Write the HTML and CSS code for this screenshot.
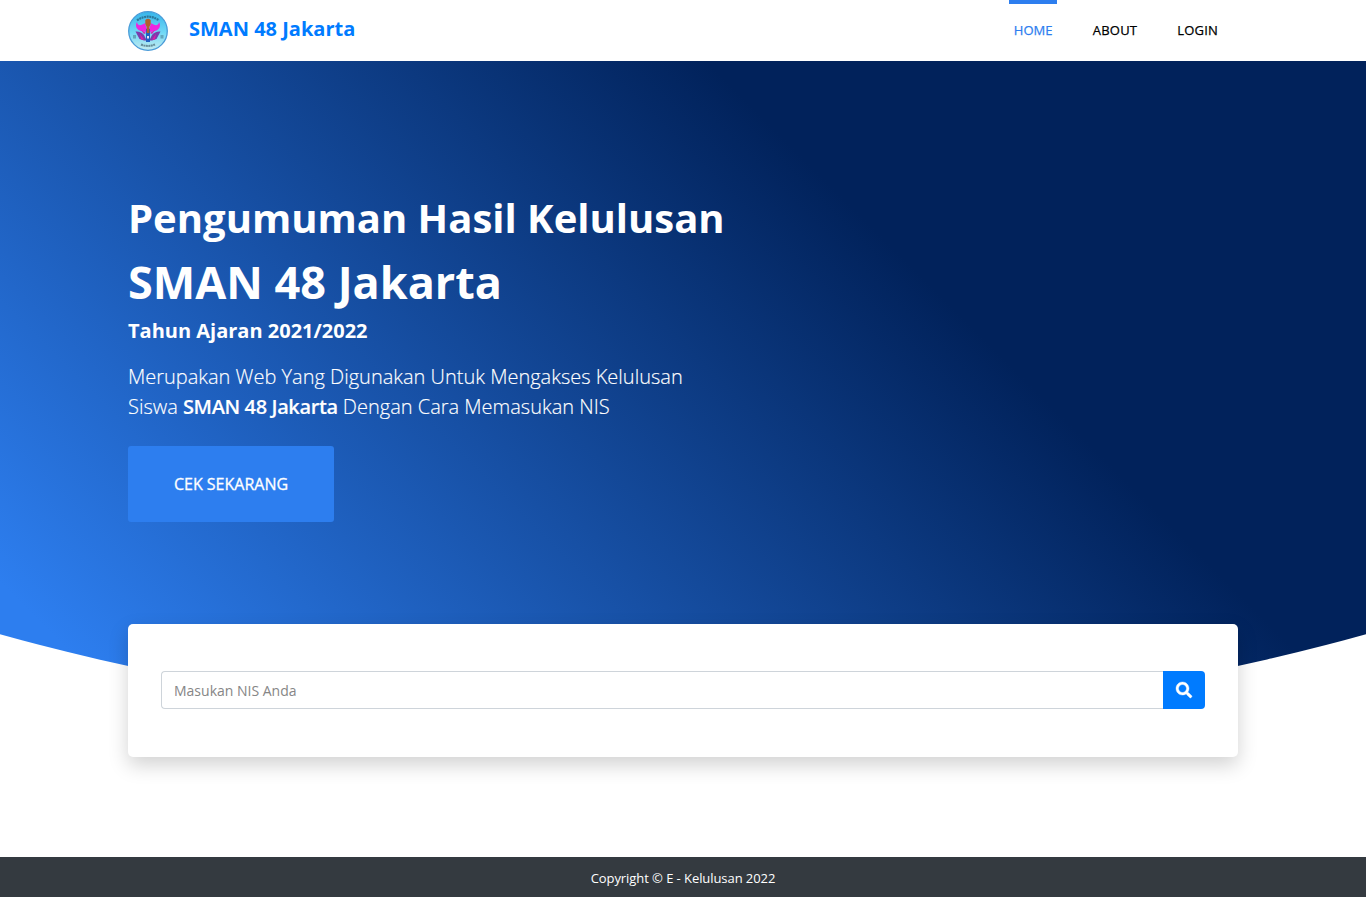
FILE: index.html
```html
<!DOCTYPE html>
<html lang="id">
<head>
<meta charset="utf-8">
<title>SMAN 48 Jakarta</title>
<link rel="stylesheet" href="styles.css">
</head>
<body>
<header class="navbar">
  <div class="container navbar-inner">
    <a class="brand">
      <svg class="logo" viewBox="0 0 40 40">
        <defs><linearGradient id="sky" x1="0" y1="0" x2="0" y2="1"><stop offset="0" stop-color="#36b4ea"/><stop offset=".55" stop-color="#72d9f6"/><stop offset="1" stop-color="#c4ebf0"/></linearGradient></defs>
        <circle cx="20" cy="20" r="19.3" fill="url(#sky)" stroke="#4a9bd8" stroke-width="1.3"/>
        <g class="emblem">
          <path d="M9 9.300Q20 2 31 9.300" fill="none" stroke="#1f5877" stroke-width="2.200" stroke-dasharray="2 .6" opacity=".7"/>
          <path d="M13 33.500Q20 36.500 27 33.500" fill="none" stroke="#4d6f7b" stroke-width="2" stroke-dasharray="2 .5" opacity=".75"/>
          <path d="M5 24h3v3.500H5zM32.500 24h3v3.500h-3z" fill="#5290a6" opacity=".7"/>
          <path d="M9 11C9.500 15 13 15 17 12L18.500 17H21.500L23 12C27 15 30.500 15 31 11C33.500 15 31 19 27 20L22 21H18L13 20C9 19 6.500 15 9 11Z" fill="#ee25df"/>
          <path d="M7.500 20.500Q13 20 16 24L18 28H22L24 24Q27 20 32.500 20.500L28.500 28L24 29.500H16L11.500 28Z" fill="#7c3bad"/>
          <path d="M12 23L16 28.500H13ZM28 23L24 28.500H27ZM13 19L18 22L16 23ZM27 19L22 22L24 23Z" fill="#e01aa7"/>
          <path d="M18 18h4v13h-4z" fill="#2060c4"/>
          <path d="M17.300 9Q20 6.500 22.700 9V13L21.300 16V22H18.700V16L17.300 13Z" fill="#b5602a"/>
          <path d="M19 25h2v2.500h-2z" fill="#e6e3f2"/>
        </g>
      </svg>
      <span class="brand-name">SMAN 48 Jakarta</span>
    </a>
    <nav class="menu">
      <a class="menu-link active">HOME</a>
      <a class="menu-link">ABOUT</a>
      <a class="menu-link">LOGIN</a>
    </nav>
  </div>
</header>
<main>
  <section class="hero">
    <div class="container">
      <h1 class="title">Pengumuman Hasil Kelulusan</h1>
      <h2 class="school">SMAN 48 Jakarta</h2>
      <h3 class="year">Tahun Ajaran 2021/2022</h3>
      <p class="lead">Merupakan Web Yang Digunakan Untuk Mengakses Kelulusan<br>Siswa <strong>SMAN 48 Jakarta</strong> Dengan Cara Memasukan NIS</p>
      <a class="cta">CEK SEKARANG</a>
    </div>
  </section>
  <section class="container search-section">
    <form class="search-card">
      <input class="search-input" type="text" placeholder="Masukan NIS Anda">
      <button class="search-button" type="button" aria-label="Cari">
        <svg width="16" height="16" viewBox="0 0 512 512" fill="#fff" stroke="#fff" stroke-width="12"><path d="M505 442.700L405.300 343c-4.500-4.500-10.600-7-17-7H372c27.600-35.300 44-79.700 44-128C416 93.100 322.900 0 208 0S0 93.100 0 208s93.100 208 208 208c48.300 0 92.700-16.400 128-44v16.300c0 6.400 2.500 12.500 7 17l99.700 99.700c9.400 9.400 24.600 9.400 33.900 0l28.300-28.300c9.400-9.400 9.400-24.600.1-34zM208 336c-70.700 0-128-57.200-128-128 0-70.700 57.200-128 128-128 70.700 0 128 57.200 128 128 0 70.700-57.200 128-128 128z"/></svg>
      </button>
    </form>
  </section>
</main>
<footer class="footer">Copyright © E - Kelulusan 2022</footer>
</body>
</html>
```
FILE: styles.css
```css
* { box-sizing: border-box; }
body { margin: 0; background: #fff; font-family: "Open Sans", sans-serif; overflow: hidden; }
h1, h2, h3, p { margin: 0; }
.container { width: 1110px; margin: 0 auto; }
.navbar { height: 61px; background: #fff; }
.navbar-inner { display: flex; justify-content: space-between; }
.brand { display: flex; gap: 21px; padding-top: 11px; }
.logo { width: 40px; height: 40px; }
.emblem { filter: blur(.45px); }
.brand-name { color: #007bff; font-size: 20px; font-weight: 700; line-height: 36px; }
.menu { display: flex; gap: 30px; padding-right: 15px; }
.menu-link { height: 61px; padding: 0 5px; border-top: 4px solid transparent; font-size: 13px; font-weight: 500; letter-spacing: .2px; line-height: 53px; color: #000; -webkit-text-stroke: .25px; }
.menu-link.active { width: 48px; margin-right: 1px; letter-spacing: 0; color: #2d7eef; border-color: #2d7eef; }
.hero { height: 663px; padding-top: 127px; background: linear-gradient(45deg, #2d7eef 7%, #01225b 67.5%); clip-path: ellipse(1366px 662px at 50% 0); color: #fff; }
.title { font-size: 40px; font-weight: 700; line-height: 60px; }
.school { font-size: 45px; font-weight: 700; line-height: 67px; }
.year { margin-top: 1px; font-size: 20px; font-weight: 700; line-height: 30px; }
.lead { margin-top: 16px; font-size: 20px; font-weight: 300; line-height: 30px; -webkit-text-stroke: .15px; }
.lead strong { font-weight: 600; letter-spacing: -.38px; }
.cta { display: flex; align-items: center; justify-content: center; width: 206px; height: 76px; margin-top: 24px; border-radius: 3px; background: #2d7eef; font-size: 16px; font-weight: 500; -webkit-text-stroke: .3px; }
.search-section { position: relative; margin-top: -100px; height: 233px; }
.search-card { display: flex; height: 133px; padding: 47px 33px; background: #fff; border-radius: 5px; box-shadow: 0 8px 20px rgba(0,0,0,.18); }
.search-input { flex: 1; height: 38px; padding: 0 12px; border: 1px solid #ced4da; border-right: 0; border-radius: 4px 0 0 4px; font: 14px "Open Sans", sans-serif; background: #fff; outline: none; }
.search-input::placeholder { color: #868686; }
.search-button { display: flex; align-items: center; justify-content: center; width: 42px; height: 38px; padding: 0; border: 0; border-radius: 0 4px 4px 0; background: #007bff; }
.search-button svg { overflow: visible; }
.footer { height: 40px; background: #343a40; color: #fff; font-size: 13px; letter-spacing: -.07px; line-height: 42px; text-align: center; }
```
